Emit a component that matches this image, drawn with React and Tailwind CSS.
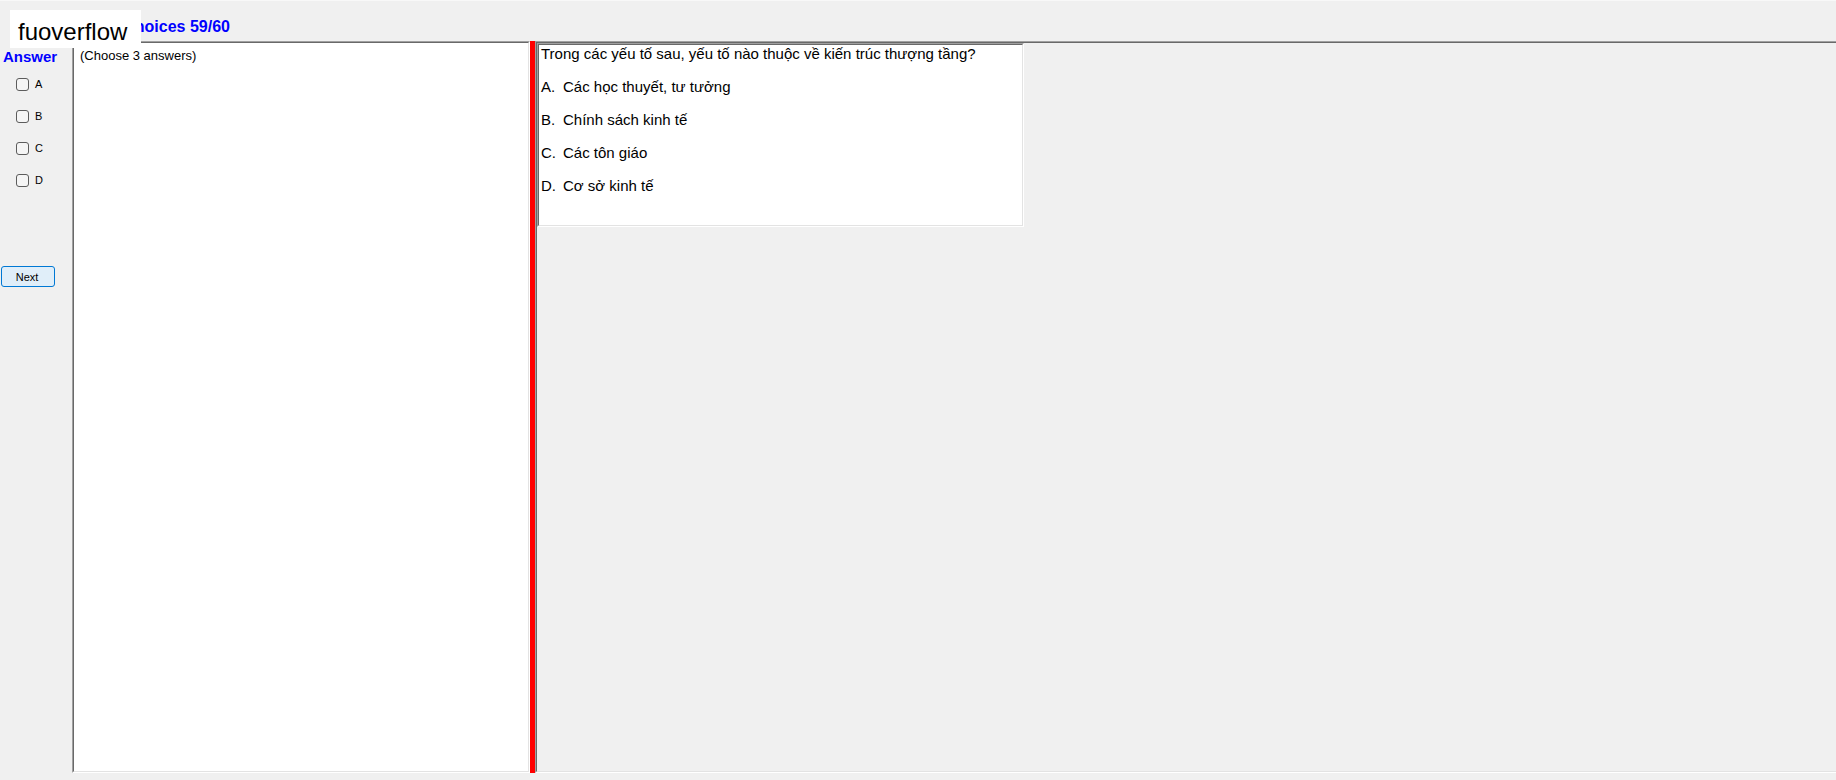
import React from "react";

const options = [
  { key: "A", text: "Các học thuyết, tư tưởng" },
  { key: "B", text: "Chính sách kinh tế" },
  { key: "C", text: "Các tôn giáo" },
  { key: "D", text: "Cơ sở kinh tế" },
];

// Two-tone inset edge: mid grey and white outside, dark and pale grey inside.
function SunkenPanel({ className = "", innerClassName = "", children }) {
  return (
    <div className={`flex border border-t-[#a0a0a0] border-l-[#a0a0a0] border-r-white border-b-white ${className}`}>
      <div
        className={`min-w-0 flex-1 border border-t-[#696969] border-l-[#696969] border-r-[#e3e3e3] border-b-[#e3e3e3] ${innerClassName}`}
      >
        {children}
      </div>
    </div>
  );
}

function AnswerColumn() {
  return (
    <aside className="flex w-18 shrink-0 flex-col items-start">
      <h2 className="pt-2 pl-[3px] text-[15px] leading-4 font-bold text-[#0000ff]">Answer</h2>
      <div className="flex flex-col gap-4 pt-[11px] pl-4">
        {options.map(({ key }) => (
          <label key={key} htmlFor={`answer-${key}`} className="flex h-4 items-center gap-[6px] text-[11px] leading-4">
            <input
              id={`answer-${key}`}
              type="checkbox"
              className="size-[13px] appearance-none rounded-[3px] border border-[#5c5c5c] bg-[#f5f5f5] checked:bg-[#0078d4]"
            />
            {key}
          </label>
        ))}
      </div>
      <button
        type="button"
        className="mt-[78px] ml-px h-[21px] w-[54px] rounded-[3px] border border-[#0078d4] bg-[#e0eef9] pr-[2px] text-center text-[11px] leading-4"
      >
        Next
      </button>
    </aside>
  );
}

function Question() {
  return (
    <SunkenPanel className="w-[487px] max-w-full" innerClassName="bg-white pl-[2px] pb-[23px] text-[15px] leading-[33px]">
      <p className="pb-[7px] leading-[18px]">Trong các yếu tố sau, yếu tố nào thuộc về kiến trúc thượng tầng?</p>
      <ol>
        {options.map(({ key, text }) => (
          <li key={key} className="flex">
            <span className="w-[22px]">{key}.</span>
            <span>{text}</span>
          </li>
        ))}
      </ol>
    </SunkenPanel>
  );
}

export default function App() {
  return (
    <div
      className="relative flex min-h-screen flex-col border-t border-[#f8f8f8] bg-[#f0f0f0] pb-[7px] text-black"
      style={{ fontFamily: '"Liberation Sans", Arial, sans-serif' }}
    >
      <header className="flex h-10 items-center pt-[11px] pl-[61px]">
        <h1 className="text-[16px] leading-5 font-bold text-[#0000ff]">Multiple choices 59/60</h1>
      </header>
      <main className="flex flex-1">
        <AnswerColumn />
        <SunkenPanel className="w-[458px] shrink-0" innerClassName="bg-white">
          <p className="pt-[5px] pl-[6px] text-[13px] leading-4">(Choose 3 answers)</p>
        </SunkenPanel>
        <div className="w-[5px] shrink-0 bg-[#ff0000]" />
        <SunkenPanel className="min-w-0 flex-1 border-r-0" innerClassName="border-r-0">
          <Question />
        </SunkenPanel>
      </main>
      <div className="absolute top-[9px] left-[10px] bg-white pt-2 pr-[14px] pb-[2px] pl-2 text-2xl leading-7">
        fuoverflow
      </div>
    </div>
  );
}
